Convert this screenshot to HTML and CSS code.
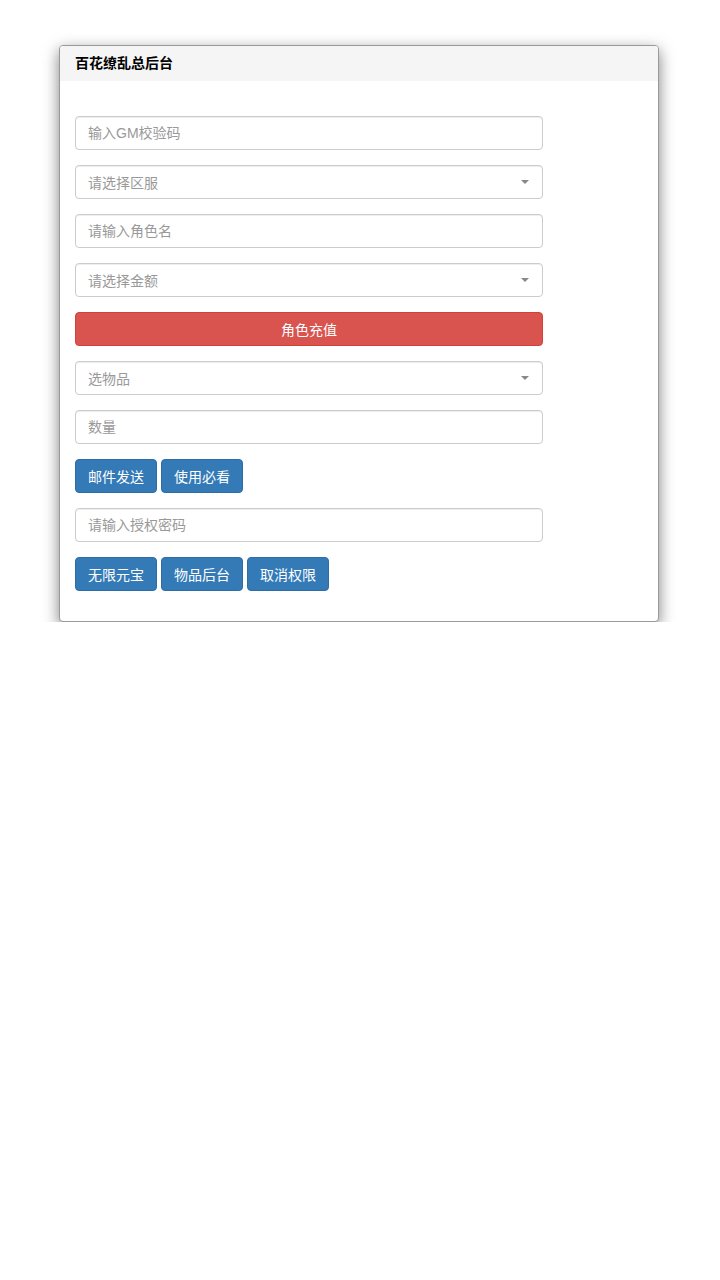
FILE: index.html
```html
<!DOCTYPE html>
<html lang="zh-CN">
<head>
    <meta charset="UTF-8">
    <meta name="viewport" content="width=device-width, initial-scale=1.0">
    <title>百花缭乱总后台</title>
    <link rel="stylesheet" href="styles.css">
</head>
<body>
    <div class="panel">
        <div class="panel-heading">百花缭乱总后台</div>
        <div class="panel-body">
            <input type="text" class="form-control" placeholder="输入GM校验码">
            <div class="select-box"><span class="ph">请选择区服</span><span class="caret"></span></div>
            <input type="text" class="form-control" placeholder="请输入角色名">
            <div class="select-box"><span class="ph">请选择金额</span><span class="caret"></span></div>
            <button class="btn btn-danger btn-block">角色充值</button>
            <div class="select-box"><span class="ph">选物品</span><span class="caret"></span></div>
            <input type="text" class="form-control" placeholder="数量">
            <div class="btn-row">
                <button class="btn btn-primary">邮件发送</button>
                <button class="btn btn-primary">使用必看</button>
            </div>
            <input type="password" class="form-control" placeholder="请输入授权密码">
            <div class="btn-row">
                <button class="btn btn-primary">无限元宝</button>
                <button class="btn btn-primary">物品后台</button>
                <button class="btn btn-primary">取消权限</button>
            </div>
        </div>
    </div>
</body>
</html>
```

FILE: styles.css
```css
body {
    margin: 0;
    padding: 0;
    background: #fff;
    font-family: "Liberation Sans", "Noto Sans CJK SC", sans-serif;
    font-size: 14px;
    color: #333;
}
.panel {
    width: 598px;
    margin: 45px 0 0 59px;
    border: 1px solid #999;
    border-radius: 4px;
    background: #fff;
    box-shadow: 0 5px 15px rgba(0, 0, 0, 0.5);
}
.panel-heading {
    height: 35px;
    line-height: 35px;
    padding: 0 15px;
    background-color: #f5f5f5;
    border-radius: 3px 3px 0 0;
    font-weight: bold;
    color: #000;
}
.panel-body {
    padding: 35px 15px 30px;
    display: flex;
    flex-direction: column;
    gap: 15px;
}
.form-control, .select-box {
    box-sizing: border-box;
    width: 468px;
    height: 34px;
    padding: 6px 12px;
    border: 1px solid #ccc;
    border-radius: 4px;
    font-family: inherit;
    font-size: 14px;
    color: #555;
    background: #fff;
    box-shadow: inset 0 1px 1px rgba(0, 0, 0, 0.075);
    margin: 0;
}
.form-control::placeholder {
    color: #999;
}
.select-box {
    display: flex;
    align-items: center;
    justify-content: space-between;
    padding-right: 12px;
}
.ph {
    color: #999;
}
.caret {
    width: 0;
    height: 0;
    border-left: 4px solid transparent;
    border-right: 4px solid transparent;
    border-top: 4px solid #888;
    margin-right: 1px;
}
.btn {
    box-sizing: border-box;
    height: 34px;
    padding: 6px 12px;
    border: 1px solid transparent;
    border-radius: 4px;
    font-family: inherit;
    font-size: 14px;
    color: #fff;
    cursor: pointer;
}
.btn-block {
    width: 468px;
}
.btn-danger {
    background-color: #d9534f;
    border-color: #d43f3a;
}
.btn-primary {
    background-color: #337ab7;
    border-color: #2e6da4;
    width: 82px;
}
.btn-row {
    display: flex;
    gap: 4px;
}
```
